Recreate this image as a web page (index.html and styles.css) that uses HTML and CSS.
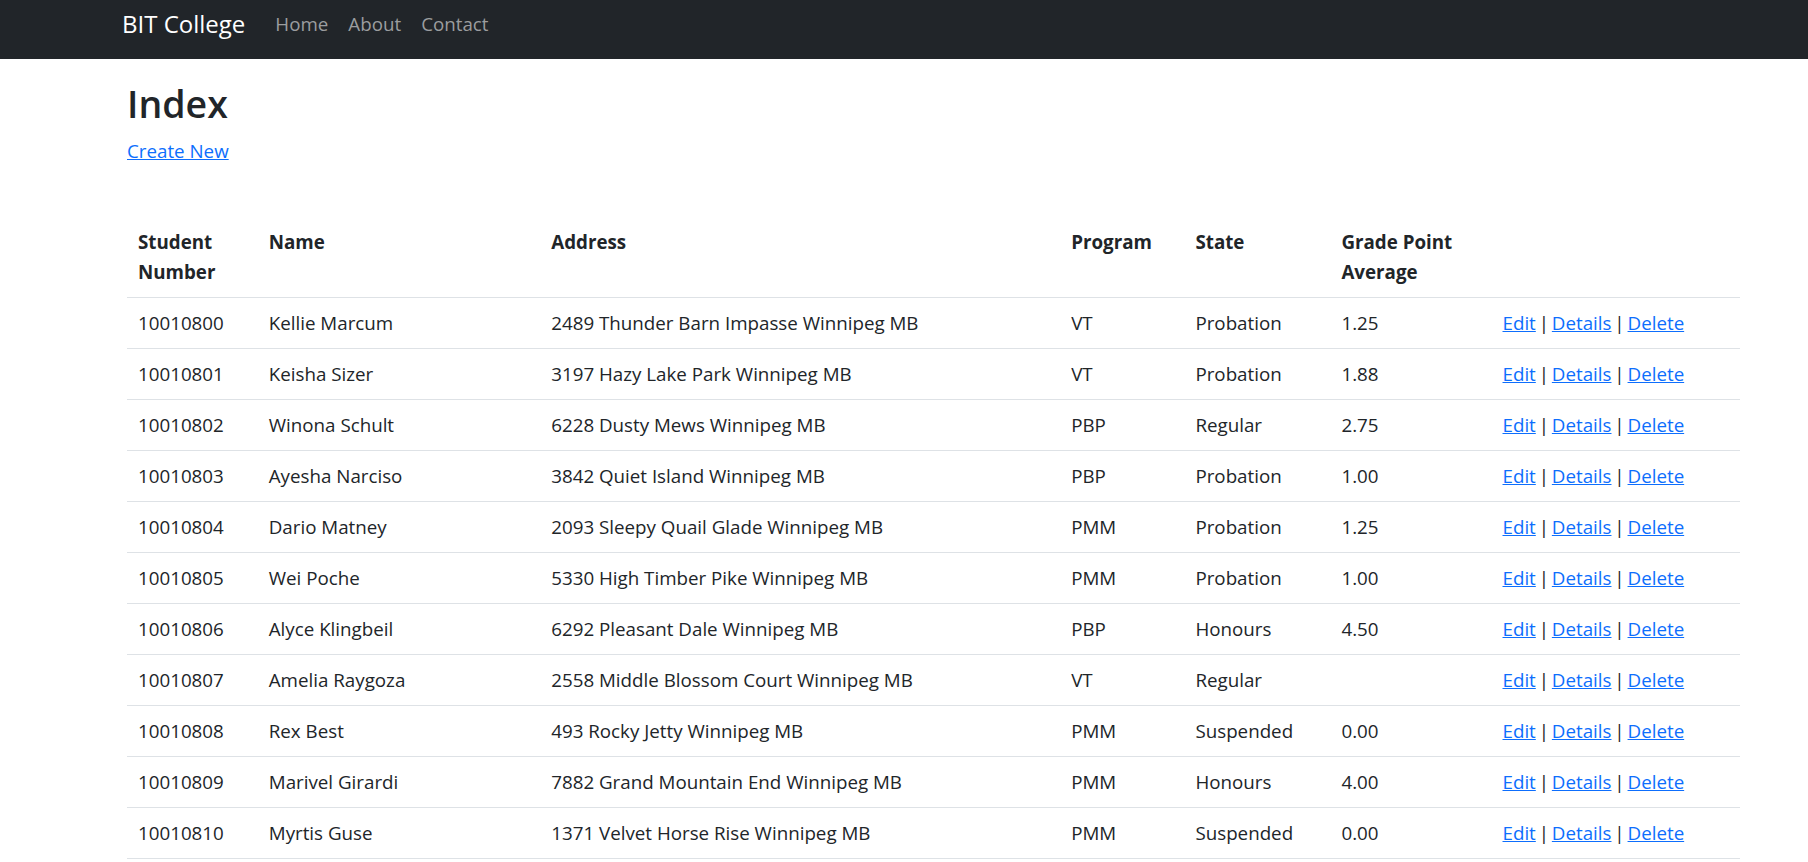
FILE: index.html
```html
<!DOCTYPE html>
<html lang="en">
<head>
<meta charset="utf-8">
<title>Index - BIT College</title>
<link rel="stylesheet" href="styles.css">
</head>
<body>
<header class="navbar">
  <div class="nav-inner">
    <a class="brand" href="#">BIT College</a>
    <nav class="nav-links">
      <a class="nav-link" href="#">Home</a>
      <a class="nav-link" href="#">About</a>
      <a class="nav-link" href="#">Contact</a>
    </nav>
  </div>
</header>
<main class="container">
  <h1 class="page-title">Index</h1>
  <p class="create"><a href="#">Create New</a></p>
  <table class="table">
    <colgroup>
      <col class="c-num"><col class="c-name"><col class="c-addr"><col class="c-prog"><col class="c-state"><col class="c-gpa"><col class="c-act">
    </colgroup>
    <thead>
      <tr><th>Student Number</th><th>Name</th><th>Address</th><th>Program</th><th>State</th><th>Grade Point Average</th><th></th></tr>
    </thead>
    <tbody>
      <tr><td>10010800</td><td>Kellie Marcum</td><td>2489 Thunder Barn Impasse Winnipeg MB</td><td>VT</td><td>Probation</td><td>1.25</td><td class="actions"><a href="#">Edit</a> | <a href="#">Details</a> | <a href="#">Delete</a></td></tr>
      <tr><td>10010801</td><td>Keisha Sizer</td><td>3197 Hazy Lake Park Winnipeg MB</td><td>VT</td><td>Probation</td><td>1.88</td><td class="actions"><a href="#">Edit</a> | <a href="#">Details</a> | <a href="#">Delete</a></td></tr>
      <tr><td>10010802</td><td>Winona Schult</td><td>6228 Dusty Mews Winnipeg MB</td><td>PBP</td><td>Regular</td><td>2.75</td><td class="actions"><a href="#">Edit</a> | <a href="#">Details</a> | <a href="#">Delete</a></td></tr>
      <tr><td>10010803</td><td>Ayesha Narciso</td><td>3842 Quiet Island Winnipeg MB</td><td>PBP</td><td>Probation</td><td>1.00</td><td class="actions"><a href="#">Edit</a> | <a href="#">Details</a> | <a href="#">Delete</a></td></tr>
      <tr><td>10010804</td><td>Dario Matney</td><td>2093 Sleepy Quail Glade Winnipeg MB</td><td>PMM</td><td>Probation</td><td>1.25</td><td class="actions"><a href="#">Edit</a> | <a href="#">Details</a> | <a href="#">Delete</a></td></tr>
      <tr><td>10010805</td><td>Wei Poche</td><td>5330 High Timber Pike Winnipeg MB</td><td>PMM</td><td>Probation</td><td>1.00</td><td class="actions"><a href="#">Edit</a> | <a href="#">Details</a> | <a href="#">Delete</a></td></tr>
      <tr><td>10010806</td><td>Alyce Klingbeil</td><td>6292 Pleasant Dale Winnipeg MB</td><td>PBP</td><td>Honours</td><td>4.50</td><td class="actions"><a href="#">Edit</a> | <a href="#">Details</a> | <a href="#">Delete</a></td></tr>
      <tr><td>10010807</td><td>Amelia Raygoza</td><td>2558 Middle Blossom Court Winnipeg MB</td><td>VT</td><td>Regular</td><td></td><td class="actions"><a href="#">Edit</a> | <a href="#">Details</a> | <a href="#">Delete</a></td></tr>
      <tr><td>10010808</td><td>Rex Best</td><td>493 Rocky Jetty Winnipeg MB</td><td>PMM</td><td>Suspended</td><td>0.00</td><td class="actions"><a href="#">Edit</a> | <a href="#">Details</a> | <a href="#">Delete</a></td></tr>
      <tr><td>10010809</td><td>Marivel Girardi</td><td>7882 Grand Mountain End Winnipeg MB</td><td>PMM</td><td>Honours</td><td>4.00</td><td class="actions"><a href="#">Edit</a> | <a href="#">Details</a> | <a href="#">Delete</a></td></tr>
      <tr><td>10010810</td><td>Myrtis Guse</td><td>1371 Velvet Horse Rise Winnipeg MB</td><td>PMM</td><td>Suspended</td><td>0.00</td><td class="actions"><a href="#">Edit</a> | <a href="#">Details</a> | <a href="#">Delete</a></td></tr>
    </tbody>
  </table>
</main>
</body>
</html>
```
FILE: styles.css
```css
html, body {
  margin: 0;
  padding: 0;
}
body {
  font-family: "Open Sans", "Noto Sans", "Liberation Sans", sans-serif;
  font-size: 18.75px;
  line-height: 30px;
  color: #212529;
  background: #ffffff;
}
a {
  color: #0d6efd;
  text-decoration: underline;
}
.navbar {
  background: #212529;
  height: 59px;
}
.nav-inner {
  display: flex;
  align-items: center;
  height: 47px;
  padding-bottom: 12px;
  padding-left: 122px;
}
.brand {
  color: #ffffff;
  text-decoration: none;
  font-size: 24px;
  line-height: 36px;
  margin-right: 20px;
}
.nav-links {
  display: flex;
}
.nav-link {
  color: #9b9d9f;
  text-decoration: none;
  padding: 0 10px;
  line-height: 30px;
}
.container {
  margin-left: 127px;
  width: 1613px;
}
.page-title {
  font-size: 37.5px;
  line-height: 45px;
  font-weight: 600;
  margin: 22px 0 10px;
}
.create {
  margin: 0 0 51px;
}
.table {
  width: 1613px;
  border-collapse: collapse;
  table-layout: fixed;
}
.table th,
.table td {
  padding: 10px 10px 10px 11px;
  text-align: left;
  vertical-align: top;
  border-bottom: 1px solid #dee2e6;
}
.table th {
  font-weight: 700;
}
.table td.actions {
  word-spacing: -2px;
}
.c-num { width: 130.7px; }
.c-name { width: 282.3px; }
.c-addr { width: 519.6px; }
.c-prog { width: 124.2px; }
.c-state { width: 145.9px; }
.c-gpa { width: 161px; }
.c-act { width: 248.3px; }
```
